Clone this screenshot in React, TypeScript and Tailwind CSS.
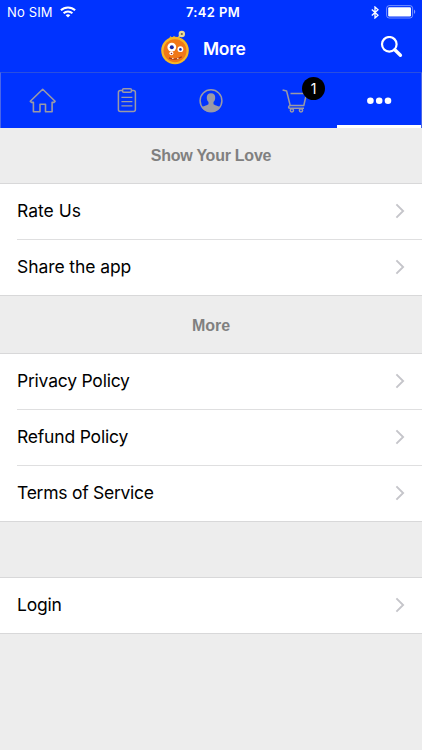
import React from "react";

function Logo() {
  return (
    <svg width="30" height="36" viewBox="0 0 30 36" fill="none">
      <path d="M16.5 9 L18.8 7.2 L21 3.8" stroke="#d3c06c" strokeWidth="1.7" />
      <path d="M9.5 9.5 L10.5 7 L12.5 8.4 L14 6.6 L16 8.4" stroke="#b9a26a" strokeWidth="1.2" />
      <circle cx="21.8" cy="4" r="3.2" fill="#e9d995" />
      <circle cx="21.8" cy="4" r="1.1" fill="#6b6550" />
      <circle cx="15" cy="20.5" r="13.8" fill="#f7b824" />
      <circle cx="15" cy="20.7" r="11.5" fill="#f07818" />
      <circle cx="11.8" cy="17.1" r="4.4" fill="#fff" />
      <circle cx="11.8" cy="17.2" r="2" fill="#1927a8" />
      <circle cx="20.4" cy="19.2" r="2.9" fill="#fff" />
      <circle cx="20.4" cy="19.4" r="1.3" fill="#1927a8" />
      <circle cx="11.4" cy="23.3" r="2" fill="#fff" />
      <circle cx="11.5" cy="23.5" r="0.8" fill="#8a2430" />
      <path d="M9 27.8 Q15.5 31 21.8 26.8" stroke="#a13a1e" strokeWidth="1.3" />
      <path d="M12 28.4h1.6M17 28.6h1.6" stroke="#ffe9c8" strokeWidth="1" />
    </svg>
  );
}

function HomeIcon() {
  return (
    <svg width="36" height="36" viewBox="0.6 0.3 36 36" fill="none" stroke="#9a9aa6" strokeWidth="1.6" strokeLinejoin="round">
      <path d="M18.3 6.6 L5.9 18.6 L7.2 19.7 H9 V29 H15.6 V21.6 H21.1 V29 H27.7 V19.7 H29.5 L30.7 18.6 Z" />
    </svg>
  );
}

function ClipboardIcon() {
  return (
    <svg width="36" height="36" viewBox="0.4 0.4 36 36" fill="none" stroke="#9a9aa6" strokeWidth="1.5">
      <rect x="9.8" y="8" width="17" height="21" rx="2" />
      <rect x="14" y="6.2" width="8.8" height="3.5" rx="1" fill="#0033ff" />
      <path d="M12.8 14.7h11M12.8 19h11M12.8 23.3h11" strokeWidth="1.2" />
    </svg>
  );
}

function PersonIcon() {
  return (
    <svg width="36" height="36" viewBox="0 0.4 36 36" fill="none">
      <circle cx="18" cy="18.1" r="10.9" stroke="#9a9aa6" strokeWidth="1.5" />
      <path
        d="M18 10.6c-2.9 0-4.4 2-4.2 4.7.1 1.9.8 3.1 1.7 4.2v2c-.6 1.4-4.6 1.6-6.7 3.4 2 3 5.3 4.8 9.2 4.8s7.2-1.8 9.2-4.8c-2.1-1.8-6.1-2-6.7-3.4v-2c.9-1.1 1.6-2.3 1.7-4.2.2-2.7-1.3-4.7-4.2-4.7Z"
        fill="#9a9aa6"
      />
    </svg>
  );
}

function CartIcon() {
  return (
    <svg width="36" height="36" viewBox="0 0.3 36 36" fill="none" stroke="#9a9aa6" strokeWidth="1.5" strokeLinejoin="round">
      <path d="M5.6 7.3 L9.6 8.3 L13.2 22.8 H26.8 L29.5 10.9 H13.5" />
      <path d="M13.2 22.8 C10.9 23.4 11.2 25.6 13.2 25.6 H27" />
      <circle cx="14.9" cy="27.6" r="1.6" />
      <circle cx="24" cy="27.6" r="1.6" />
    </svg>
  );
}

function DotsIcon() {
  return (
    <svg width="36" height="36" viewBox="-0.3 0.3 36 36" fill="#fff">
      <circle cx="9.1" cy="18.1" r="3.3" />
      <circle cx="17.9" cy="18.1" r="3.3" />
      <circle cx="26.7" cy="18.1" r="3.3" />
    </svg>
  );
}

function StatusBar() {
  return (
    <div className="grid h-6 grid-cols-[1fr_auto_1fr] items-center pl-[7px] pr-[6px] text-[13px] leading-6">
      <div className="flex items-center gap-[7px]">
        <span className="tracking-[0.15px]">No SIM</span>
        <svg width="16" height="12" viewBox="0 0 16 12" fill="none" stroke="#fff" strokeWidth="2">
          <path d="M.9 4.3C4.8.5 11.2.5 15.1 4.3" />
          <path d="M3.6 7.2c2.5-2.4 6.3-2.4 8.8 0" />
          <path d="M8 11.6 5.7 9.2c1.3-1.2 3.3-1.2 4.6 0Z" fill="#fff" stroke="none" />
        </svg>
      </div>
      <span className="pl-[3px] font-semibold tracking-[0.35px]">7:42 PM</span>
      <div className="flex items-center justify-end gap-[7px]">
        <svg width="8" height="13" viewBox="0 0 8 13" fill="none" stroke="#fff" strokeWidth="1.3">
          <path d="M.8 3.6 7 9.3 4 12V1l3 2.7L.8 9.4" />
        </svg>
        <svg width="30" height="14" viewBox="0 0 30 14">
          <rect x=".6" y=".6" width="26" height="12.4" rx="2.6" fill="none" stroke="#fff" strokeOpacity=".45" />
          <rect x="2.2" y="2.2" width="22.8" height="9.2" rx="1.2" fill="#fff" />
          <path d="M28 4.6c1.7.7 1.7 3.8 0 4.5Z" fill="#fff" fillOpacity=".5" />
        </svg>
      </div>
    </div>
  );
}

function Tab({ active, children }: { active?: boolean; children: React.ReactNode }) {
  return (
    <div className={"flex flex-1 items-center justify-center " + (active ? "shadow-[inset_0_-3px_0_#fff]" : "")}>
      <div className="relative">{children}</div>
    </div>
  );
}

type Item = { label: string; tracking: string };

function Row({ item, last }: { item: Item; last: boolean }) {
  return (
    <div className={"flex h-14 bg-white pl-[17px] " + (last ? "border-b border-[#d8d8d9]" : "")}>
      <div
        className={
          "flex flex-1 items-center justify-between pr-[17px] pb-px " + (last ? "" : "border-b border-[#dfdfe0]")
        }
      >
        <span className={"text-[17.5px] leading-6 text-black " + item.tracking}>{item.label}</span>
        <svg width="10" height="16" viewBox="0 0 10 16" fill="none" stroke="#c5c5ca" strokeWidth="1.9">
          <path d="M1.4 1.4 8.1 8l-6.7 6.6" />
        </svg>
      </div>
    </div>
  );
}

function Group({ items }: { items: Item[] }) {
  return (
    <div className="border-t border-[#d8d8d9]">
      {items.map((item, i) => (
        <Row key={item.label} item={item} last={i === items.length - 1} />
      ))}
    </div>
  );
}

function Heading({ text, tracking }: { text: string; tracking: string }) {
  return (
    <h2
      className={
        "flex h-full items-center justify-center font-['Liberation_Sans',Arial,sans-serif] text-[16px] font-bold text-[#808080] " +
        tracking
      }
    >
      {text}
    </h2>
  );
}

const love: Item[] = [
  { label: "Rate Us", tracking: "tracking-normal" },
  { label: "Share the app", tracking: "tracking-[-0.08px]" },
];

const policies: Item[] = [
  { label: "Privacy Policy", tracking: "tracking-[-0.22px]" },
  { label: "Refund Policy", tracking: "tracking-[-0.19px]" },
  { label: "Terms of Service", tracking: "tracking-[-0.26px]" },
];

const account: Item[] = [{ label: "Login", tracking: "tracking-[-0.2px]" }];

export default function App() {
  return (
    <div className="h-[750px] w-[422px] overflow-hidden bg-[#ededed] font-['Inter','Liberation_Sans',sans-serif]">
      <header className="bg-[#0033ff] text-white">
        <StatusBar />
        <div className="flex h-12 items-center pl-[160px] pr-[18px]">
          <Logo />
          <h1 className="ml-[13px] pt-px text-[17.5px] font-semibold leading-6 tracking-[-0.3px]">More</h1>
          <svg className="ml-auto" width="24" height="24" viewBox="0 0 24 24" fill="none" stroke="#fff">
            <circle cx="9.3" cy="8.3" r="7.3" strokeWidth="2.2" />
            <path d="m14.8 13.7 5.6 5.5" strokeWidth="3.4" strokeLinecap="round" />
          </svg>
        </div>
        <nav className="flex h-14 border-x border-t border-x-[#4a66e8] border-t-[#294fe0]">
          <Tab><HomeIcon /></Tab>
          <Tab><ClipboardIcon /></Tab>
          <Tab><PersonIcon /></Tab>
          <Tab>
            <CartIcon />
            <span className="absolute -top-[6px] left-[25px] flex size-[23px] items-center justify-center rounded-full bg-black text-[14px]">
              1
            </span>
          </Tab>
          <Tab active><DotsIcon /></Tab>
        </nav>
      </header>
      <main>
        <div className="h-[55px]"><Heading text="Show Your Love" tracking="tracking-[-0.25px]" /></div>
        <Group items={love} />
        <div className="h-[57px] pt-[2px]"><Heading text="More" tracking="tracking-normal" /></div>
        <Group items={policies} />
        <div className="h-[55px]" />
        <Group items={account} />
      </main>
    </div>
  );
}
